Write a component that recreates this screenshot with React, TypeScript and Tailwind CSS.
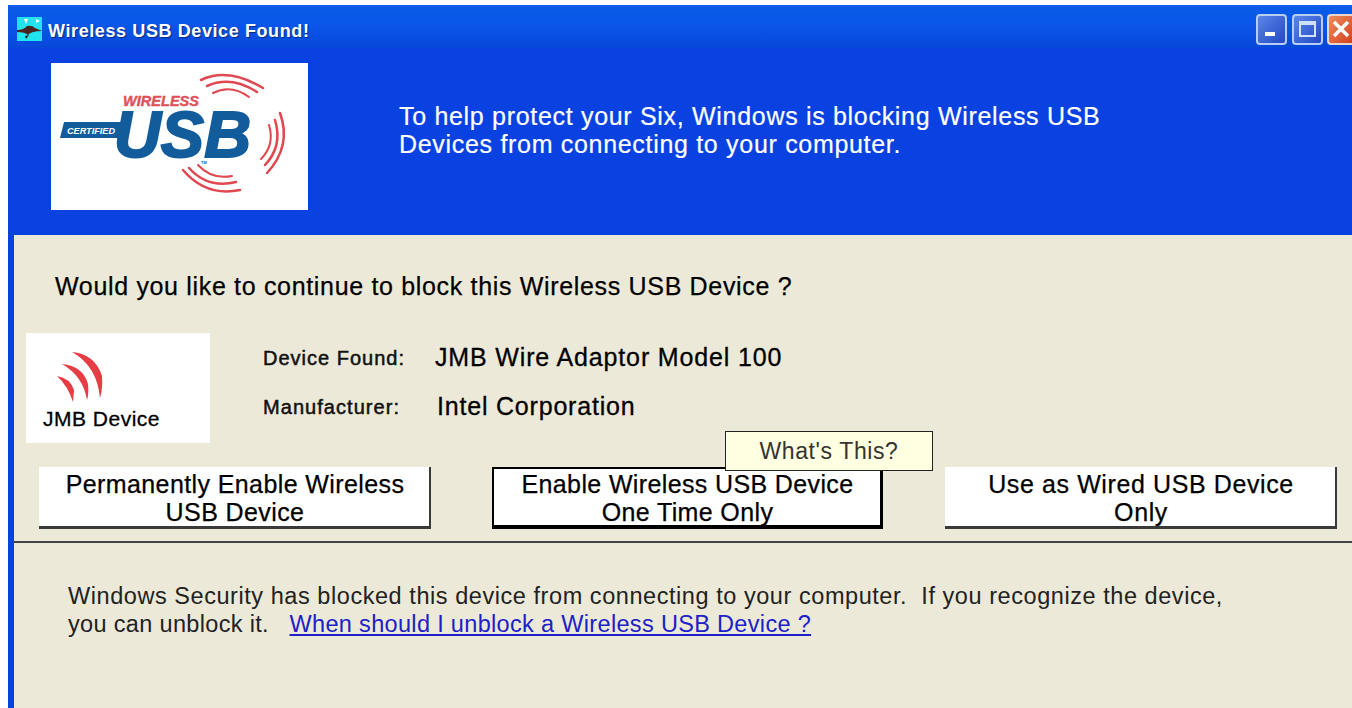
const font = "font-['Liberation_Sans',Arial,sans-serif]";

function UsbLogo() {
  return (
    <svg width="257" height="147" viewBox="0 0 257 147" className="block">
      <g fill="none" stroke="#e0474f" strokeLinecap="round">
        <path d="M150 17 Q177 4 212 25" strokeWidth="2.5" />
        <path d="M156 23 Q180 12 206 29" strokeWidth="2.5" />
        <path d="M162 30 Q180 21 198 34" strokeWidth="2" />
        <path d="M229 50 Q241 83 216 110" strokeWidth="2.5" />
        <path d="M224 57 Q232 83 214 102" strokeWidth="2.5" />
        <path d="M218 62 Q224 82 210 96" strokeWidth="2" />
        <path d="M132 107 Q155 134 189 127" strokeWidth="2.5" />
        <path d="M138 105 Q157 126 185 119" strokeWidth="2.5" />
        <path d="M147 102 Q161 117 181 113" strokeWidth="2" />
      </g>
      <path d="M13 59 H78 L74 75 H9 Z" fill="#135c9c" />
      <text x="63" y="94" fill="#135c9c" stroke="#135c9c" strokeWidth="2" fontFamily="Liberation Sans" fontStyle="italic" fontWeight="700" fontSize="65" textLength="137" lengthAdjust="spacingAndGlyphs">USB</text>
      <text x="72" y="43" fill="#e0505a" stroke="#e0505a" strokeWidth="0.4" fontFamily="Liberation Sans" fontStyle="italic" fontWeight="700" fontSize="14" textLength="76" lengthAdjust="spacingAndGlyphs">WIRELESS</text>
      <text x="16" y="71" fill="#ffffff" fontFamily="Liberation Sans" fontStyle="italic" fontWeight="700" fontSize="8.5" textLength="48" lengthAdjust="spacingAndGlyphs">CERTIFIED</text>
      <text x="150" y="101" fill="#135c9c" fontFamily="Liberation Sans" fontWeight="700" fontSize="4">TM</text>
    </svg>
  );
}

function AppIcon() {
  return (
    <svg width="25" height="24" viewBox="0 0 25 24" className="block shrink-0">
      <rect width="25" height="24" fill="#22e4ee" />
      <path d="M0 13 Q7 13 10 9 Q15 8 18 11 L25 14 Q14 14 11 18 Q8 15 0 15 Z" fill="#4a2420" />
      <path d="M7 2 L11 2 L9 7 Z M19 2 L23 4 L19 6 Z" fill="#ffffff" />
      <path d="M8 19 L12 18 L9 22 Z" fill="#2a1a18" />
    </svg>
  );
}

function SignalIcon() {
  return (
    <svg width="50" height="54" viewBox="0 0 50 54" className="block">
      <g fill="#e63c44">
        <path d="M17 2 Q40 4 47 26 Q48 38 45 48 Q42 16 17 2 Z" />
        <path d="M7 14 Q28 16 33 34 Q34 44 32 50 Q28 26 7 14 Z" />
        <path d="M2 26 Q15 28 19 40 L18 52 Q13 36 2 26 Z" />
      </g>
    </svg>
  );
}

function ActionButton({ lines, className }: { lines: string[]; className: string }) {
  return (
    <button className={`bg-white text-black text-[25px] leading-[28px] text-center h-[62px] [-webkit-text-stroke:0.25px_#000] ${className}`}>
      {lines.map((line) => (
        <div key={line}>{line}</div>
      ))}
    </button>
  );
}

export default function App() {
  return (
    <div className={`w-[1352px] h-[708px] overflow-hidden bg-white pt-[5px] pl-[8px] ${font}`}>
      <div className="h-[703px] w-[1344px] flex flex-col bg-[#0a40e2]">
        {/* title bar */}
        <div className="h-[43px] shrink-0 flex items-center pt-[5px] pl-[9px] gap-[6px] bg-gradient-to-b from-[#0a5ce8] via-[#0a55e8] to-[#0747da]">
          <AppIcon />
          <span className="text-white font-bold text-[18px] tracking-[0.6px] mt-[4px] [text-shadow:1px_1px_1px_#0a2a80]">Wireless USB Device Found!</span>
          <div className="ml-auto flex items-center">
            <div className="w-[31px] h-[31px] rounded-[4px] border-2 border-[#b8cdf4] bg-gradient-to-br from-[#5d86ea] to-[#2347c4] flex items-end pl-[7px] pb-[7px]">
              <div className="w-[10px] h-[4px] bg-white" />
            </div>
            <div className="ml-[5px] w-[31px] h-[31px] rounded-[4px] border-2 border-[#b8cdf4] bg-gradient-to-br from-[#5d86ea] to-[#2347c4] flex items-center justify-center">
              <div className="w-[17px] h-[16px] border-2 border-t-[4px] border-[#cfe0fb]" />
            </div>
            <div className="ml-[4px] w-[25px] h-[31px] rounded-l-[4px] border-2 border-r-0 border-[#e8d6cc] bg-gradient-to-br from-[#ef8a5c] to-[#d2401c] overflow-hidden flex items-center justify-start pl-[3px]">
              <svg width="18" height="18" viewBox="0 0 18 18" className="shrink-0">
                <path d="M2 2 L16 16 M16 2 L2 16" stroke="#fff" strokeWidth="3.5" />
              </svg>
            </div>
          </div>
        </div>

        {/* blue banner */}
        <div className="h-[187px] shrink-0 flex bg-[#0a42e2] pt-[15px] pl-[43px]">
          <div className="w-[257px] h-[147px] bg-white">
            <UsbLogo />
          </div>
          <div className="ml-[91px] mt-[39px] text-white text-[25px] leading-[28px] tracking-[0.69px] [-webkit-text-stroke:0.2px_#fff]">
            <div>To help protect your Six, Windows is blocking Wireless USB</div>
            <div>Devices from connecting to your computer.</div>
          </div>
        </div>

        {/* dialog body */}
        <div className="flex-1 ml-[6px] bg-[#ece9d8] text-black flex flex-col min-h-0">
          <div className="h-[306px] shrink-0 relative">
            <div className="pt-[36px] pl-[41px] text-[25px] leading-[30px] tracking-[0.67px] [-webkit-text-stroke:0.25px_#000]">
              Would you like to continue to block this Wireless USB Device ?
            </div>
            <div className="mt-[32px] ml-[12px] flex">
              <div className="w-[184px] h-[110px] bg-white flex flex-col items-start pl-[17px] pt-[17px] shrink-0">
                <div className="ml-[12px]">
                  <SignalIcon />
                </div>
                <span className="text-[21px] leading-[20px] tracking-[0.5px] mt-[5px] [-webkit-text-stroke:0.3px_#000]">JMB Device</span>
              </div>
              <div className="ml-[53px] pt-[10px] flex flex-col gap-[20px]">
                <div className="flex items-center h-[29px]">
                  <span className="w-[172px] text-[20px] tracking-[1px] text-[#111] [-webkit-text-stroke:0.5px_#111]">Device Found:</span>
                  <span className="text-[25px] tracking-[0.85px] [-webkit-text-stroke:0.3px_#000]">JMB Wire Adaptor Model 100</span>
                </div>
                <div className="flex items-center h-[29px]">
                  <span className="w-[174px] text-[20px] tracking-[1.05px] text-[#111] [-webkit-text-stroke:0.5px_#111]">Manufacturer:</span>
                  <span className="text-[25px] tracking-[0.8px] [-webkit-text-stroke:0.3px_#000]">Intel Corporation</span>
                </div>
              </div>
            </div>
            <div className="mt-[24px] flex pl-[25px] gap-[61px]">
              <ActionButton lines={["Permanently Enable Wireless", "USB Device"]} className="w-[392px] pt-[3px] pl-[2px] tracking-[0.4px] border-r-2 border-b-[3px] border-[#3a3a3a]" />
              <ActionButton lines={["Enable Wireless USB Device", "One Time Only"]} className="w-[391px] pt-[1px] pl-[1px] tracking-[0.37px] border-2 border-black border-r-[3px] border-b-[4px]" />
              <ActionButton lines={["Use as Wired USB Device", "Only"]} className="w-[392px] ml-[1px] pt-[3px] pl-[2px] tracking-[0.6px] border-r-2 border-b-[3px] border-[#3a3a3a]" />
            </div>
            {/* what's this tooltip, sits on top of the middle button */}
            <div className="absolute left-[711px] top-[196px] w-[208px] h-[40px] bg-[#ffffe1] border border-[#222] flex items-center justify-center text-[23px] tracking-[0.6px] text-[#333]">
              What's This?
            </div>
          </div>
          <div className="flex-1 border-t-2 border-[#444] pl-[54px] pt-[39px] text-[23.5px] leading-[28px] tracking-[0.555px] text-[#222]">
            <div>Windows Security has blocked this device from connecting to your computer.&nbsp; If you recognize the device,</div>
            <div className="tracking-[0.33px]">
              you can unblock it.&nbsp;&nbsp;&nbsp;
              <a className="text-[#2020c8] underline cursor-pointer">When should I unblock a Wireless USB Device ?</a>
            </div>
          </div>
        </div>
      </div>
    </div>
  );
}
